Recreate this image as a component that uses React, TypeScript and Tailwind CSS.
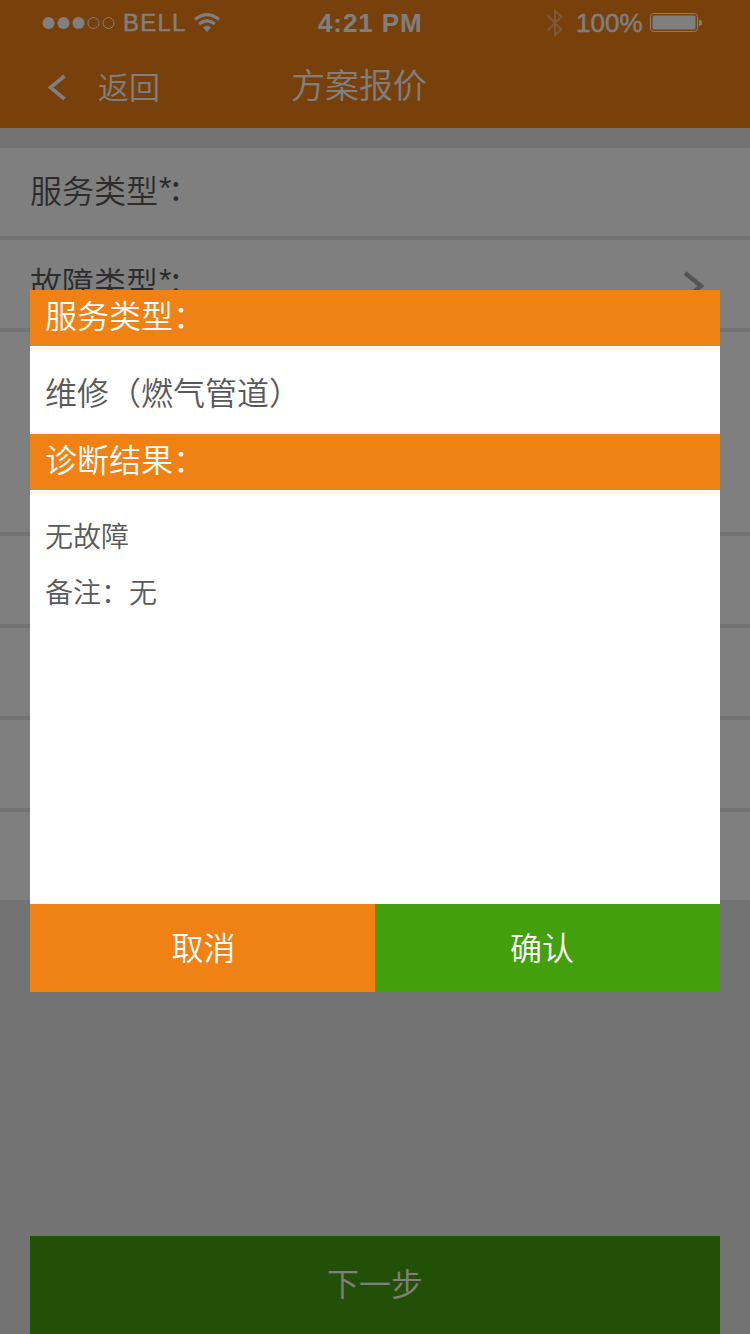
import type { ReactNode } from "react";

const cjk = "font-['Noto_Sans_CJK_SC',sans-serif] font-[350]";
const latin = "font-['Liberation_Sans','Noto_Sans_CJK_SC',sans-serif]";

function StatusBar() {
  return (
    <div className={`grid h-11 grid-cols-3 items-center pt-px text-white ${latin}`}>
      <div className="flex items-center pl-[42px]">
        <svg width="74" height="14" viewBox="0 0 74 14" fill="currentColor">
          <circle cx="6.5" cy="7" r="6" />
          <circle cx="21.5" cy="7" r="6" />
          <circle cx="36.5" cy="7" r="6" />
          <circle cx="51.5" cy="7" r="5.5" fill="none" stroke="currentColor" />
          <circle cx="66.5" cy="7" r="5.5" fill="none" stroke="currentColor" />
        </svg>
        <span className="ml-[7px] w-[64px] text-[24px] leading-[44px] tracking-[1.2px] [-webkit-text-stroke:0.4px]">
          BELL
        </span>
        <svg className="ml-[7px]" width="26" height="20" viewBox="0 0 26 20" fill="none" stroke="currentColor">
          <path d="M1 6.5Q13-3.3 25 6.5" strokeWidth="3" />
          <path d="M5.2 11Q13 4.8 20.8 11" strokeWidth="3" />
          <path d="M9 14.2Q13 11.2 17 14.2L13 19Z" fill="currentColor" stroke="none" />
        </svg>
      </div>
      <div className="pl-[68px] text-[26px] leading-11 font-bold tracking-[0.9px] whitespace-nowrap">4:21 PM</div>
      <div className="flex items-center pl-[46px]">
        <svg width="18" height="28" viewBox="0 0 18 28" fill="none" stroke="currentColor" strokeWidth="2" className="opacity-40">
          <path d="M1.5 6.5L15.5 20.5L9 26V2L15.5 7.5L1.5 21.5" />
        </svg>
        <span className="ml-3 w-[66px] text-[26px] leading-11 [-webkit-text-stroke:0.4px]">100%</span>
        <svg className="ml-[7px]" width="54" height="22" viewBox="0 0 54 22" fill="none">
          <rect x="1.5" y="1.5" width="47" height="18" rx="3" stroke="currentColor" />
          <rect x="3.5" y="3.5" width="43" height="14" rx="1.5" fill="currentColor" />
          <path d="M50 7.5Q53 8 53 10.7T50 14Z" fill="currentColor" />
        </svg>
      </div>
    </div>
  );
}

function Header() {
  return (
    <header className="h-32 bg-[#f08114]">
      <StatusBar />
      <div className={`flex h-[84px] text-white ${cjk}`}>
        <svg className="mt-[30px] ml-[47px]" width="20" height="28" viewBox="0 0 20 28" fill="none" stroke="currentColor" strokeWidth="3.6">
          <path d="M17.5 2L3.5 13.5L17.5 25" />
        </svg>
        <span className="mt-[18px] ml-[31px] w-[193px] text-[31px] leading-[48px]">返回</span>
        <h1 className="mt-[15px] text-[34px] leading-[50px]">方案报价</h1>
      </div>
    </header>
  );
}

function Row({ children, tall = false }: { children?: ReactNode; tall?: boolean }) {
  return (
    <div
      className={`flex items-start justify-between bg-white pt-[17px] pr-[45px] pl-[30px] text-[32px] leading-[48px] text-[#595959] ${cjk} ${tall ? "h-[200px]" : "h-[88px]"}`}
    >
      {children}
    </div>
  );
}

function FieldLabel({ children }: { children: ReactNode }) {
  return (
    <span className="flex">
      {children}
      <span className="-mt-px ml-px w-[12px] font-['Liberation_Sans',sans-serif] text-[32px]">*</span>
      <span className="-mt-[3px] font-['Noto_Sans_CJK_SC',sans-serif] text-[35px] font-normal">:</span>
    </span>
  );
}

function SectionTitle({ children }: { children: ReactNode }) {
  return <h2 className="h-14 bg-[#f08114] pl-[15px] text-[32px] leading-[48px] text-white">{children}</h2>;
}

function Dialog() {
  return (
    <div className={`absolute top-[290px] left-[30px] flex h-[702px] w-[690px] flex-col bg-white text-[#595959] ${cjk}`}>
      <SectionTitle>服务类型：</SectionTitle>
      <p className="h-[88px] pl-[15px] text-[32px] leading-[90px]">维修（燃气管道）</p>
      <SectionTitle>诊断结果：</SectionTitle>
      <div className="flex-1 pt-[17px] pl-[15px] text-[28px] leading-[56px]">
        <p>无故障</p>
        <p>备注：无</p>
      </div>
      <div className="grid h-[88px] grid-cols-2 text-[32px] leading-[84px] text-white">
        <button className="bg-[#f08114] pb-[4px] pl-[2px]">取消</button>
        <button className="bg-[#43a00c] pr-[11px] pb-[4px]">确认</button>
      </div>
    </div>
  );
}

export default function App() {
  return (
    <div className="relative flex h-[1334px] w-[750px] flex-col overflow-hidden bg-[#e6e6e6]">
      <Header />
      <main className="mt-5 flex flex-col gap-1">
        <Row>
          <FieldLabel>服务类型</FieldLabel>
        </Row>
        <Row>
          <FieldLabel>故障类型</FieldLabel>
          <svg className="mt-[14px]" width="22" height="30" viewBox="0 0 22 30" fill="none" stroke="#aaaaaa" strokeWidth="4.5">
            <path d="M2 2L18 15L2 28" />
          </svg>
        </Row>
        <Row tall />
        <Row />
        <Row />
        <Row />
        <Row />
      </main>
      <button className={`mx-[30px] mt-auto h-[98px] bg-[#43a00c] pb-[5px] text-[32px] leading-[93px] text-white ${cjk}`}>
        下一步
      </button>
      <div className="absolute inset-0 bg-black/50" />
      <Dialog />
    </div>
  );
}
